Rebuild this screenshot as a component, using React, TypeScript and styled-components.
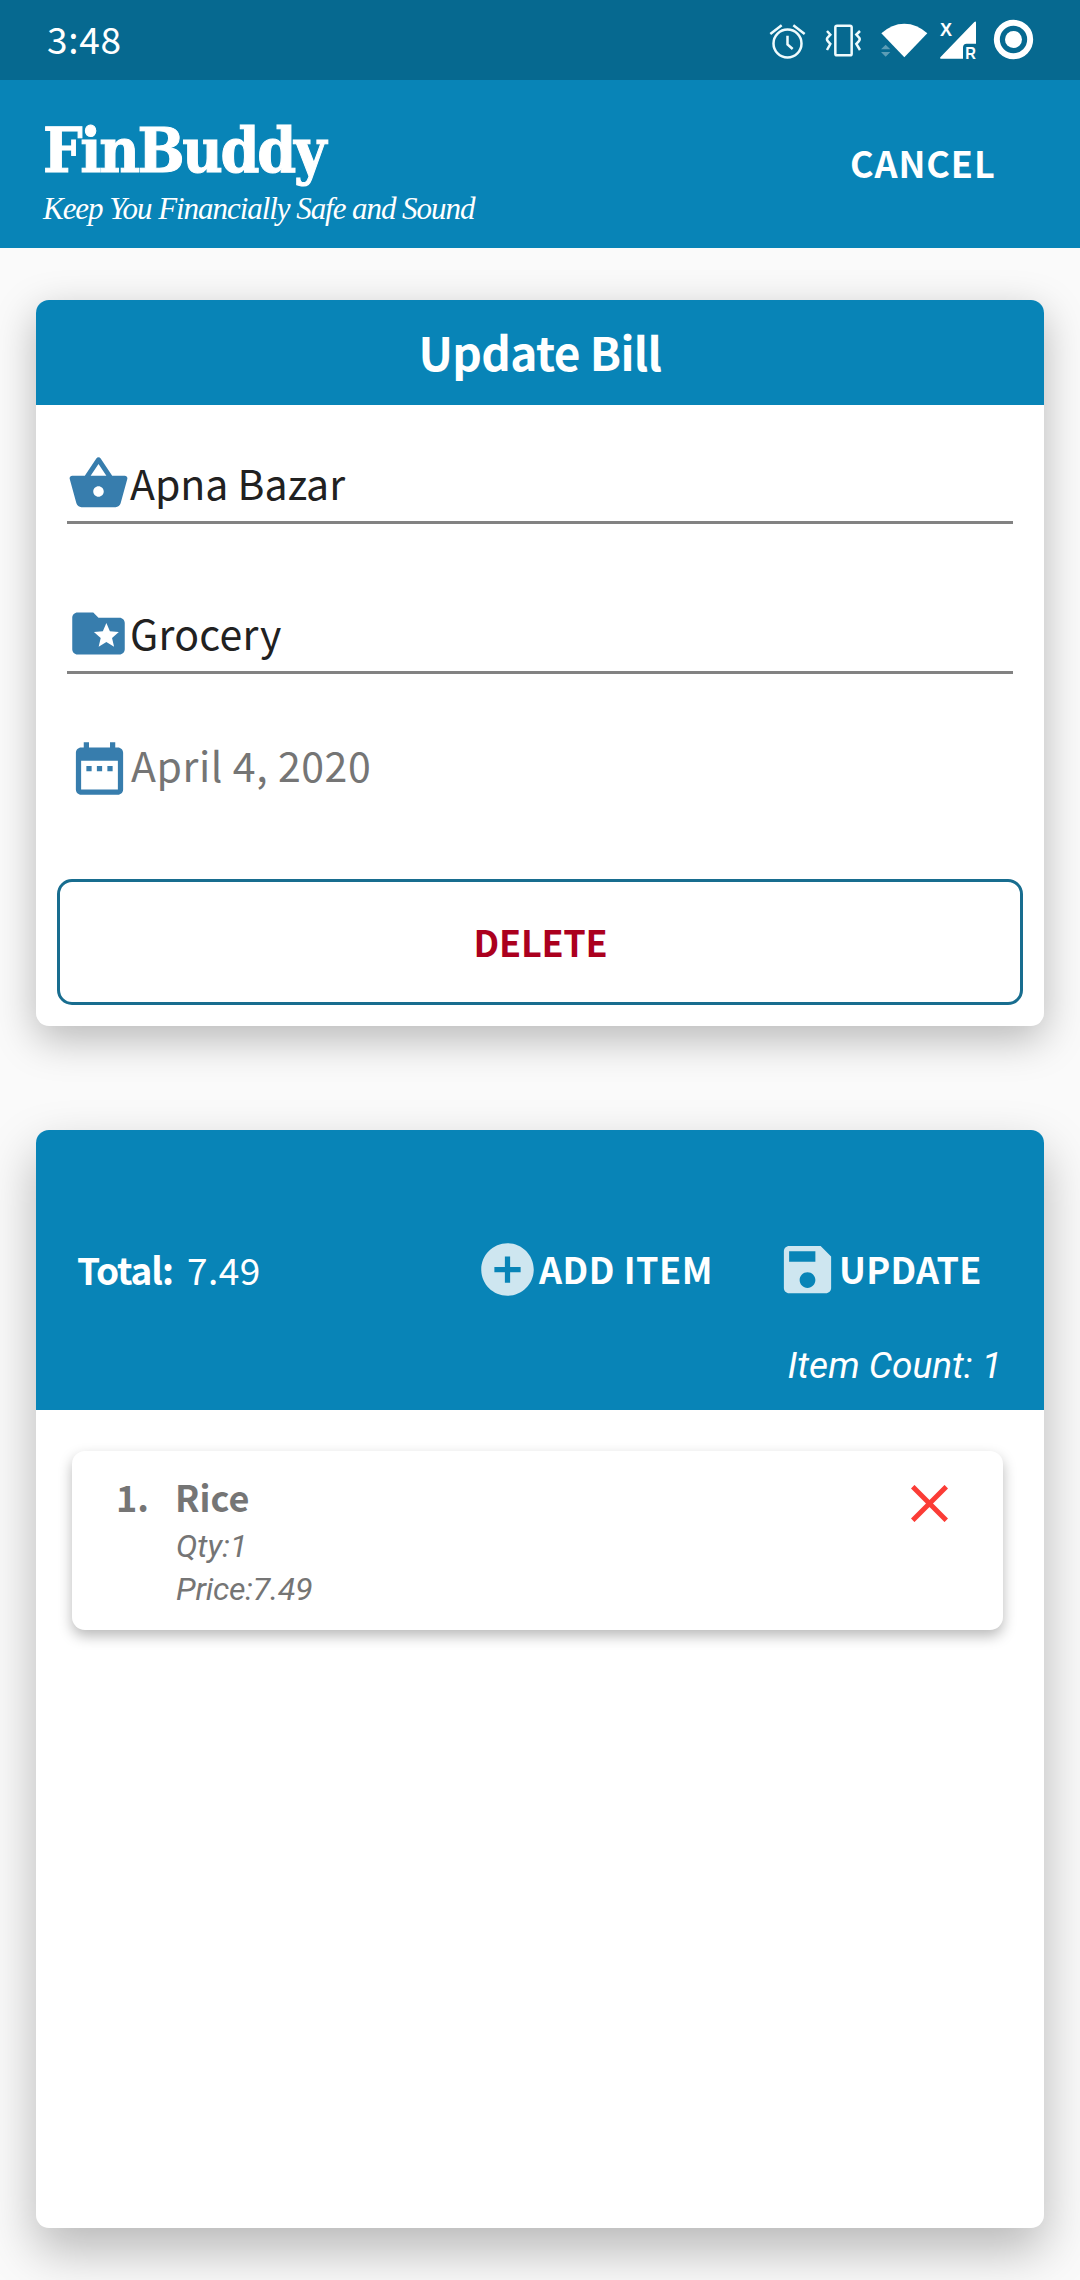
import React from "react";
import styled, { createGlobalStyle } from "styled-components";

const color = {
  primary: "#0884b7",
  primaryDark: "#066990",
  icon: "#377dad",
  iconLight: "#cee6f0",
  text: "#212121",
  muted: "#757575",
  danger: "#ab001e",
};

const sans = '"Noto Sans CJK SC", "Open Sans", sans-serif';

const GlobalStyle = createGlobalStyle`
  body {
    margin: 0;
    background: #fafafa;
    font-family: ${sans};
  }
  button {
    margin: 0;
    padding: 0;
    border: 0;
    background: none;
    font-family: inherit;
  }
`;

const Screen = styled.div`
  width: 1080px;
  height: 2280px;
  overflow: hidden;
  background: #fafafa;
`;

const StatusBar = styled.div`
  display: flex;
  justify-content: space-between;
  box-sizing: border-box;
  height: 80px;
  padding: 0 45px 0 47px;
  background: ${color.primaryDark};
  color: #fff;
`;

const Clock = styled.span`
  font-size: 37px;
  line-height: 77px;
  letter-spacing: 0.7px;
`;

const StatusIcons = styled.div`
  display: flex;
`;

const StatusSvg = styled.svg`
  display: block;
  height: 80px;
`;

const AppBar = styled.header`
  display: grid;
  grid-template-columns: 807px 1fr;
  box-sizing: border-box;
  height: 168px;
  padding-left: 43px;
  background: ${color.primary};
  color: #fff;
`;

const Brand = styled.div`
  padding-top: 31px;
`;

const BrandName = styled.h1`
  margin: 0;
  font: 700 62px/80px "DejaVu Serif Condensed", "DejaVu Serif", serif;
  letter-spacing: -2.3px;
  -webkit-text-stroke: 1px #fff;
`;

const Tagline = styled.p`
  margin: 0;
  font: italic 400 31px/35px "Liberation Serif", serif;
  letter-spacing: -1.05px;
  white-space: nowrap;
`;

const CancelButton = styled.button`
  align-self: start;
  color: #fff;
  text-align: left;
  font-weight: 700;
  font-size: 36px;
  line-height: 164px;
  letter-spacing: 0.9px;
`;

const Content = styled.main`
  display: flex;
  flex-direction: column;
  gap: 104px;
  padding: 52px 36px;
`;

const Card = styled.section<{ $height: number; $lift: number }>`
  height: ${(p) => p.$height}px;
  border-radius: 13px;
  background: #fff;
  box-shadow: 0 ${(p) => p.$lift}px ${(p) => p.$lift + 28}px rgba(0, 0, 0, 0.27);
`;

const CardTitle = styled.h2`
  margin: 0;
  height: 105px;
  border-radius: 13px 13px 0 0;
  background: ${color.primary};
  color: #fff;
  text-align: center;
  font-weight: 700;
  font-size: 46px;
  line-height: 102px;
  letter-spacing: -0.64px;
`;

const Form = styled.div`
  display: flex;
  flex-direction: column;
  padding: 47px 31px 0;
`;

const InputField = styled.div<{ $gap: number }>`
  display: flex;
  height: 69px;
  margin-bottom: ${(p) => p.$gap}px;
  border-bottom: 3px solid #828282;
`;

const DateField = styled.div`
  display: flex;
  height: 63px;
  margin-bottom: 79px;
  padding-left: 1px;
`;

const FieldText = styled.span<{ $muted?: boolean; $spacing: number }>`
  color: ${(p) => (p.$muted ? color.muted : color.text)};
  font-size: 41px;
  line-height: ${(p) => (p.$muted ? 54 : 60)}px;
  letter-spacing: ${(p) => p.$spacing}px;
`;

const Glyph = styled.svg`
  display: block;
  flex: none;
  width: 63px;
  height: 63px;
`;

const DeleteButton = styled.button`
  display: block;
  box-sizing: border-box;
  width: 966px;
  height: 126px;
  margin: 0 21px;
  padding: 0 0 3px 1px;
  border: 3px solid #186d8f;
  border-radius: 15px;
  color: ${color.danger};
  font-weight: 700;
  font-size: 36px;
  letter-spacing: -0.26px;
`;

const BillHeader = styled.div`
  box-sizing: border-box;
  height: 280px;
  padding: 108px 45px 0 42px;
  border-radius: 13px 13px 0 0;
  background: ${color.primary};
  color: #fff;
`;

const BillActions = styled.div`
  display: grid;
  grid-template-columns: 109px 289px 300px 1fr;
  height: 63px;
  font-size: 37px;
  line-height: 62px;
`;

const TotalLabel = styled.span`
  margin-left: -1px;
  font-weight: 700;
  letter-spacing: -1.1px;
`;

const TotalValue = styled.span`
  letter-spacing: 0.5px;
`;

const ActionButton = styled.button<{ $spacing: number }>`
  display: flex;
  color: #fff;
  font-weight: 700;
  font-size: 36px;
  line-height: 61px;
  letter-spacing: ${(p) => p.$spacing}px;
  white-space: nowrap;
`;

const ItemCount = styled.p`
  margin: 38px -3px 0 0;
  text-align: right;
  font: italic 400 37px/54px Roboto, sans-serif;
`;

const ItemCard = styled.article`
  display: grid;
  grid-template-columns: 59px 1fr 37px;
  box-sizing: border-box;
  width: 931px;
  height: 179px;
  margin: 41px 0 0 36px;
  padding: 20px 55px 0 44px;
  border-radius: 13px;
  background: #fff;
  box-shadow: 0 6px 14px rgba(0, 0, 0, 0.28);
  color: ${color.muted};
`;

const ItemIndex = styled.span`
  font-weight: 700;
  font-size: 36px;
  line-height: 50px;
`;

const ItemName = styled.h3`
  margin: 0 0 4px;
  font-weight: 700;
  font-size: 36px;
  line-height: 50px;
`;

const ItemDetail = styled.p<{ $spacing?: number }>`
  margin: 0 0 0 1px;
  font: italic 400 32px/43px Roboto, sans-serif;
  letter-spacing: ${(p) => p.$spacing ?? 0}px;
`;

const RemoveButton = styled.button`
  align-self: start;
  width: 37px;
  height: 37px;
  margin-top: 14px;

  svg {
    display: block;
  }
`;

const paths = {
  basket:
    "M17.21 9l-4.38-6.56c-.19-.28-.51-.42-.83-.42-.32 0-.64.14-.83.43L6.79 9H2c-.55 0-1 .45-1 1 0 .09.01.18.04.27l2.54 9.27c.23.84 1 1.46 1.92 1.46h13c.92 0 1.69-.62 1.93-1.46l2.54-9.27L23 10c0-.55-.45-1-1-1h-4.79zM9 9l3-4.4L15 9H9zm3 8c-1.1 0-2-.9-2-2s.9-2 2-2 2 .9 2 2-.9 2-2 2z",
  folder:
    "M20 6h-8l-2-2H4c-1.1 0-2 .9-2 2v12c0 1.1.9 2 2 2h16c1.1 0 2-.9 2-2V8c0-1.1-.9-2-2-2zm-2.06 11L15 15.28 12.06 17l.78-3.33-2.59-2.24 3.41-.29L15 8l1.34 3.14 3.41.29-2.59 2.24.78 3.33z",
  calendar:
    "M9 11H7v2h2v-2zm4 0h-2v2h2v-2zm4 0h-2v2h2v-2zm2-7h-1V2h-2v2H8V2H6v2H5c-1.11 0-1.99.9-1.99 2L3 20c0 1.1.89 2 2 2h14c1.1 0 2-.9 2-2V6c0-1.1-.9-2-2-2zm0 16H5V9h14v11z",
  add: "M12 2C6.48 2 2 6.48 2 12s4.48 10 10 10 10-4.48 10-10S17.52 2 12 2zm5 11h-4v4h-2v-4H7v-2h4V7h2v4h4v2z",
  save: "M17 3H5c-1.11 0-2 .9-2 2v14c0 1.1.89 2 2 2h14c1.1 0 2-.9 2-2V7l-4-4zm-5 16c-1.66 0-3-1.34-3-3s1.34-3 3-3 3 1.34 3 3-1.34 3-3 3zm3-10H5V5h10v4z",
};

function Icon({ name, light }: { name: keyof typeof paths; light?: boolean }) {
  return (
    <Glyph viewBox="0 0 24 24" fill={light ? color.iconLight : color.icon}>
      <path d={paths[name]} />
    </Glyph>
  );
}

function AlarmIcon() {
  return (
    <StatusSvg width="48" viewBox="84 0 144 240" fill="none" stroke="#effbfd" strokeWidth="7.5">
      <circle cx="142.5" cy="130.5" r="42" />
      <path d="M91 102L125 76M160 76L194 102M142.5 107V133L158 147" />
    </StatusSvg>
  );
}

function VibrateIcon() {
  return (
    <StatusSvg width="56" viewBox="228 0 168 240" fill="none" stroke="#effbfd" strokeWidth="7.5">
      <rect x="286" y="77" width="49" height="89" rx="5" />
      <path d="M261 93L271 104L262 114Q259 119 264 124L271 132L261 150M360 93L349 104L358 114Q361 119 356 124L349 132L360 150" />
    </StatusSvg>
  );
}

function WifiIcon() {
  return (
    <StatusSvg width="62" viewBox="396 0 186 240" fill="#fff">
      <path d="M424 100Q455 71 493 71T562 100L493 172Z" />
      <path d="M423 148L437 134L451 148ZM423 156L437 170L451 156Z" opacity="0.35" />
    </StatusSvg>
  );
}

const SignalLabel = styled.text`
  font-family: "Liberation Sans", sans-serif;
  font-weight: 700;
  fill: #fff;
`;

function SignalIcon() {
  return (
    <StatusSvg width="51" viewBox="582 0 153 240" fill="#fff">
      <path d="M603 176Q598 176 601 172L703 66Q708 62 708 68V131H680Q669 131 669 143V176Z" />
      <SignalLabel x="600" y="108" fontSize="54">X</SignalLabel>
      <SignalLabel x="676" y="176" fontSize="50" textLength="32" lengthAdjust="spacingAndGlyphs">R</SignalLabel>
    </StatusSvg>
  );
}

function RingIcon() {
  return (
    <StatusSvg width="50" viewBox="735 0 150 240" fill="#fff">
      <circle cx="820.5" cy="118.5" r="50" fill="none" stroke="#fff" strokeWidth="18" />
      <circle cx="820.5" cy="118.5" r="25.5" />
    </StatusSvg>
  );
}

const items = [{ name: "Rice", qty: "1", price: "7.49" }];

export default function App() {
  return (
    <Screen>
      <GlobalStyle />
      <StatusBar>
        <Clock>3:48</Clock>
        <StatusIcons>
          <AlarmIcon />
          <VibrateIcon />
          <WifiIcon />
          <SignalIcon />
          <RingIcon />
        </StatusIcons>
      </StatusBar>
      <AppBar>
        <Brand>
          <BrandName>FinBuddy</BrandName>
          <Tagline>Keep You Financially Safe and Sound</Tagline>
        </Brand>
        <CancelButton>CANCEL</CancelButton>
      </AppBar>
      <Content>
        <Card $height={726} $lift={13}>
          <CardTitle>Update Bill</CardTitle>
          <Form>
            <InputField $gap={78}>
              <Icon name="basket" />
              <FieldText $spacing={0}>Apna Bazar</FieldText>
            </InputField>
            <InputField $gap={63}>
              <Icon name="folder" />
              <FieldText $spacing={0.27}>Grocery</FieldText>
            </InputField>
            <DateField>
              <Icon name="calendar" />
              <FieldText $muted $spacing={0.58}>April 4, 2020</FieldText>
            </DateField>
          </Form>
          <DeleteButton>DELETE</DeleteButton>
        </Card>
        <Card $height={1098} $lift={22}>
          <BillHeader>
            <BillActions>
              <TotalLabel>Total:</TotalLabel>
              <TotalValue>7.49</TotalValue>
              <ActionButton $spacing={0.5}>
                <Icon name="add" light />
                ADD ITEM
              </ActionButton>
              <ActionButton $spacing={0.25}>
                <Icon name="save" light />
                UPDATE
              </ActionButton>
            </BillActions>
            <ItemCount>Item Count: {items.length}</ItemCount>
          </BillHeader>
          {items.map((item, i) => (
            <ItemCard key={item.name}>
              <ItemIndex>{i + 1}.</ItemIndex>
              <div>
                <ItemName>{item.name}</ItemName>
                <ItemDetail>Qty:{item.qty}</ItemDetail>
                <ItemDetail $spacing={-0.2}>Price:{item.price}</ItemDetail>
              </div>
              <RemoveButton>
                <svg width="37" height="37" viewBox="0 0 37 37" stroke="#fb3c36" strokeWidth="5">
                  <path d="M1.7 1.7L35.3 35.3M35.3 1.7L1.7 35.3" />
                </svg>
              </RemoveButton>
            </ItemCard>
          ))}
        </Card>
      </Content>
    </Screen>
  );
}
